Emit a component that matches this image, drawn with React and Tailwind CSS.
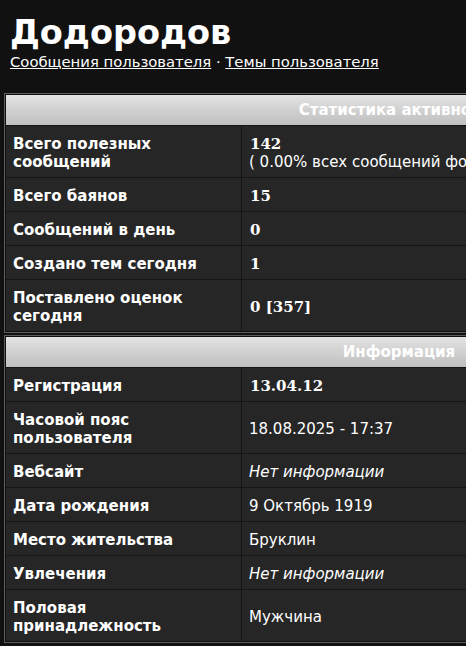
import React from "react";

const sans = { fontFamily: '"DejaVu Sans", Verdana, sans-serif' };

function Row({ label, children }) {
  return (
    <div className="grid grid-cols-[236px_1fr] border-t border-[#151515] bg-[#262626]">
      <div className="border-r border-[#151515] pl-[7px] pr-2 pt-[9px] pb-[6px] text-[15px] font-bold leading-[18px] text-white flex items-center">
        <span>{label}</span>
      </div>
      <div className="pl-[7px] pr-2 pt-[9px] pb-[6px] text-[15px] leading-[18px] text-white flex items-center whitespace-nowrap">
        <div>{children}</div>
      </div>
    </div>
  );
}

function Num({ children }) {
  return (
    <span
      className="font-bold text-[15px] pl-px"
      style={{ fontFamily: '"DejaVu Serif", Georgia, serif' }}
    >
      {children}
    </span>
  );
}

function Table({ title, children, className = "" }) {
  return (
    <div className={"ml-[4px] w-[790px] border border-[#5c5c5c] bg-[#111111] p-px " + className}>
      <div className="h-[30px] bg-gradient-to-b from-[#e3e3e3] to-[#bfbfbf] text-center text-[15px] font-bold leading-[30px] text-white">
        {title}
      </div>
      {children}
    </div>
  );
}

export default function App() {
  return (
    <div className="h-[646px] w-full overflow-hidden bg-[#111111] text-white" style={sans}>
      <div className="w-[800px]">
        <h1 className="pl-[10px] pt-[13px] text-[33.5px] font-bold leading-[40px] text-white">
          Додородов
        </h1>
        <div className="pl-[10px] text-[14.8px] leading-[18px] text-white">
          <a href="#" className="underline">Сообщения пользователя</a>
          {" · "}
          <a href="#" className="underline">Темы пользователя</a>
        </div>
        <Table title="Статистика активности" className="mt-[22px]">
          <Row label={<>Всего полезных<br />сообщений</>}>
            <Num>142</Num>
            <br />( 0.00% всех сообщений форума )
          </Row>
          <Row label="Всего баянов"><Num>15</Num></Row>
          <Row label="Сообщений в день"><Num>0</Num></Row>
          <Row label="Создано тем сегодня"><Num>1</Num></Row>
          <Row label={<>Поставлено оценок<br />сегодня</>}><Num>0 [357]</Num></Row>
        </Table>
        <Table title="Информация" className="mt-[2px]">
          <Row label="Регистрация"><Num>13.04.12</Num></Row>
          <Row label={<>Часовой пояс<br />пользователя</>}>18.08.2025 - 17:37</Row>
          <Row label="Вебсайт"><i>Нет информации</i></Row>
          <Row label="Дата рождения">9 Октябрь 1919</Row>
          <Row label="Место жительства">Бруклин</Row>
          <Row label="Увлечения"><i>Нет информации</i></Row>
          <Row label={<>Половая<br />принадлежность</>}>Мужчина</Row>
        </Table>
      </div>
    </div>
  );
}
